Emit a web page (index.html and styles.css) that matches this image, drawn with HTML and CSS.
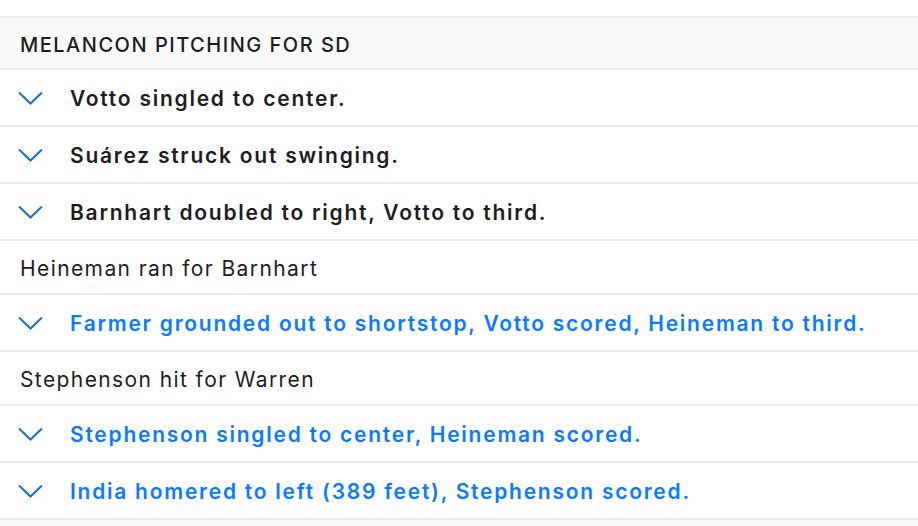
FILE: index.html
```html
<!DOCTYPE html>
<html>
<head>
<meta charset="utf-8">
<link rel="stylesheet" href="styles.css">
</head>
<body>
<div class="spacer"></div>
<div class="header">MELANCON PITCHING FOR SD</div>
<ul class="plays">
  <li class="play"><svg class="chev" viewBox="0 0 25 14"><path d="M1 1.5 L12.5 12.5 L24 1.5"/></svg><span class="text">Votto singled to center.</span></li>
  <li class="play"><svg class="chev" viewBox="0 0 25 14"><path d="M1 1.5 L12.5 12.5 L24 1.5"/></svg><span class="text">Suárez struck out swinging.</span></li>
  <li class="play"><svg class="chev" viewBox="0 0 25 14"><path d="M1 1.5 L12.5 12.5 L24 1.5"/></svg><span class="text">Barnhart doubled to right, Votto to third.</span></li>
  <li class="sub">Heineman ran for Barnhart</li>
  <li class="play scoring"><svg class="chev" viewBox="0 0 25 14"><path d="M1 1.5 L12.5 12.5 L24 1.5"/></svg><span class="text">Farmer grounded out to shortstop, Votto scored, Heineman to third.</span></li>
  <li class="sub">Stephenson hit for Warren</li>
  <li class="play scoring"><svg class="chev" viewBox="0 0 25 14"><path d="M1 1.5 L12.5 12.5 L24 1.5"/></svg><span class="text">Stephenson singled to center, Heineman scored.</span></li>
  <li class="play scoring"><svg class="chev" viewBox="0 0 25 14"><path d="M1 1.5 L12.5 12.5 L24 1.5"/></svg><span class="text">India homered to left (389 feet), Stephenson scored.</span></li>
</ul>
<div class="footer"></div>
</body>
</html>
```
FILE: styles.css
```css
html, body {
  margin: 0;
  padding: 0;
  background: #ffffff;
  font-family: Inter, "Liberation Sans", sans-serif;
  color: #1d1d1f;
}
.spacer {
  height: 16px;
}
.header {
  box-sizing: border-box;
  height: 54px;
  border-top: 2px solid #ebebeb;
  border-bottom: 2px solid #ebebeb;
  background: #f9f9f9;
  padding: 3px 0 0 20px;
  display: flex;
  align-items: center;
  font-size: 20px;
  font-weight: 500;
  letter-spacing: 1.5px;
}
.plays {
  list-style: none;
  margin: 0;
  padding: 0;
}
.play {
  box-sizing: border-box;
  height: 57px;
  border-bottom: 2px solid #ebebeb;
  display: flex;
  align-items: center;
  padding: 2px 0 0 18px;
  gap: 27px;
  font-size: 21px;
  font-weight: 600;
  letter-spacing: 1.75px;
}
.chev {
  width: 25px;
  height: 14px;
  flex: none;
  margin-top: -2px;
}
.chev path {
  fill: none;
  stroke: #1a6fd6;
  stroke-width: 2;
}
.scoring .text {
  color: #0a7aff;
}
.sub {
  box-sizing: border-box;
  height: 54px;
  border-bottom: 2px solid #ebebeb;
  display: flex;
  align-items: center;
  padding: 2px 0 0 20px;
  font-size: 21px;
  font-weight: 400;
  letter-spacing: 1.4px;
}
.footer {
  height: 20px;
  background: #f9f9f9;
}
```
